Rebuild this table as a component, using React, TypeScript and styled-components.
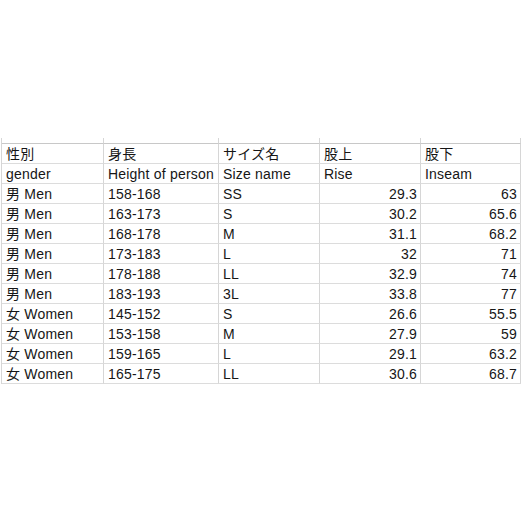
import React from "react";
import styled, { createGlobalStyle } from "styled-components";

const Global = createGlobalStyle`
  html, body { margin: 0; padding: 0; background: #ffffff; }
  body { font-family: "Liberation Sans", "Noto Sans CJK JP", sans-serif; }
`;

const Page = styled.div`
  width: 522px;
  height: 522px;
  padding-top: 138px;
  padding-left: 1px;
  box-sizing: border-box;
  background: #fff;
`;

const Sheet = styled.div`
  display: grid;
  grid-template-columns: 102px 115px 101px 101px 100px;
  border-left: 1px solid #d6d6d6;
  width: 520px;
`;

const Cell = styled.div<{ $align?: "left" | "right"; $stub?: boolean }>`
  height: ${(p) => (p.$stub ? 5 : 19)}px;
  border-right: 1px solid #d6d6d6;
  border-bottom: ${(p) => (p.$stub ? "1px solid #c8c8c8" : "1px solid #dcdcdc")};
  padding: 0 ${(p) => (p.$align === "right" ? 3 : 0)}px 0
    ${(p) => (p.$align === "right" ? 0 : 4)}px;
  font-family: "Liberation Sans", "Noto Sans CJK JP", sans-serif;
  font-size: 14px;
  letter-spacing: 0.2px;
  line-height: 21px;
  color: #161616;
  text-align: ${(p) => p.$align ?? "left"};
  white-space: nowrap;
  overflow: hidden;
`;

const header1 = ["性別", "身長", "サイズ名", "股上", "股下"];
const header2 = ["gender", "Height of person", "Size name", "Rise", "Inseam"];

const rows: [string, string, string, string, string][] = [
  ["男 Men", "158-168", "SS", "29.3", "63"],
  ["男 Men", "163-173", "S", "30.2", "65.6"],
  ["男 Men", "168-178", "M", "31.1", "68.2"],
  ["男 Men", "173-183", "L", "32", "71"],
  ["男 Men", "178-188", "LL", "32.9", "74"],
  ["男 Men", "183-193", "3L", "33.8", "77"],
  ["女 Women", "145-152", "S", "26.6", "55.5"],
  ["女 Women", "153-158", "M", "27.9", "59"],
  ["女 Women", "159-165", "L", "29.1", "63.2"],
  ["女 Women", "165-175", "LL", "30.6", "68.7"],
];

export default function App() {
  return (
    <>
      <Global />
      <Page>
        <Sheet>
          {header1.map((_, i) => (
            <Cell key={`s${i}`} $stub />
          ))}
          {header1.map((t, i) => (
            <Cell key={`h1${i}`}>{t}</Cell>
          ))}
          {header2.map((t, i) => (
            <Cell key={`h2${i}`}>{t}</Cell>
          ))}
          {rows.map((r, ri) =>
            r.map((t, ci) => (
              <Cell key={`r${ri}-${ci}`} $align={ci >= 3 ? "right" : "left"}>
                {t}
              </Cell>
            ))
          )}
        </Sheet>
      </Page>
    </>
  );
}
